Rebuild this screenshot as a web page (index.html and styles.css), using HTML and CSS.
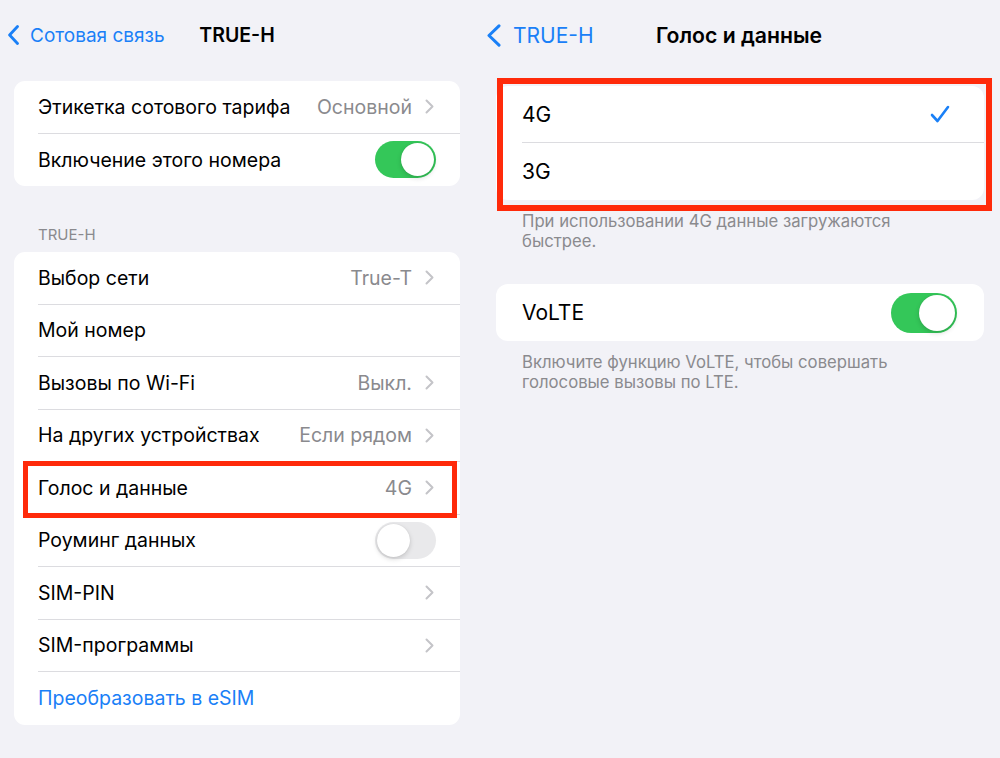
FILE: index.html
```html
<!DOCTYPE html>
<html lang="ru">
<head>
<meta charset="utf-8">
<title>Настройки</title>
<link rel="stylesheet" href="styles.css">
</head>
<body>
<div class="screen">
  <section class="panel panel-left">
    <header class="nav">
      <a class="back">
        <svg class="back-icon" width="11" height="20" viewBox="0 0 11 20"><path d="M9.5 1.5 L1.6 10 L9.5 18.5" fill="none" stroke="currentColor" stroke-width="2.8" stroke-linecap="round" stroke-linejoin="round"/></svg>
        <span>Сотовая связь</span>
      </a>
      <h1 class="title">TRUE-H</h1>
      <span></span>
    </header>

    <div class="group">
      <div class="row"><div class="row-body"><span class="label">Этикетка сотового тарифа</span><span class="detail">Основной</span><svg class="chev" width="9" height="15" viewBox="0 0 9 15"><path d="M1.5 1.5 L7.5 7.5 L1.5 13.5" fill="none" stroke="currentColor" stroke-width="2" stroke-linecap="round" stroke-linejoin="round"/></svg></div></div>
      <div class="row"><div class="row-body"><span class="label">Включение этого номера</span><span class="switch on"></span></div></div>
    </div>

    <div class="section-header">TRUE-H</div>

    <div class="group">
      <div class="row"><div class="row-body"><span class="label">Выбор сети</span><span class="detail">True-T</span><svg class="chev" width="9" height="15" viewBox="0 0 9 15"><path d="M1.5 1.5 L7.5 7.5 L1.5 13.5" fill="none" stroke="currentColor" stroke-width="2" stroke-linecap="round" stroke-linejoin="round"/></svg></div></div>
      <div class="row"><div class="row-body"><span class="label">Мой номер</span></div></div>
      <div class="row"><div class="row-body"><span class="label">Вызовы по Wi-Fi</span><span class="detail">Выкл.</span><svg class="chev" width="9" height="15" viewBox="0 0 9 15"><path d="M1.5 1.5 L7.5 7.5 L1.5 13.5" fill="none" stroke="currentColor" stroke-width="2" stroke-linecap="round" stroke-linejoin="round"/></svg></div></div>
      <div class="row"><div class="row-body"><span class="label">На других устройствах</span><span class="detail">Если рядом</span><svg class="chev" width="9" height="15" viewBox="0 0 9 15"><path d="M1.5 1.5 L7.5 7.5 L1.5 13.5" fill="none" stroke="currentColor" stroke-width="2" stroke-linecap="round" stroke-linejoin="round"/></svg></div></div>
      <div class="row marked"><div class="row-body"><span class="label">Голос и данные</span><span class="detail">4G</span><svg class="chev" width="9" height="15" viewBox="0 0 9 15"><path d="M1.5 1.5 L7.5 7.5 L1.5 13.5" fill="none" stroke="currentColor" stroke-width="2" stroke-linecap="round" stroke-linejoin="round"/></svg></div></div>
      <div class="row"><div class="row-body"><span class="label">Роуминг данных</span><span class="switch"></span></div></div>
      <div class="row"><div class="row-body"><span class="label">SIM-PIN</span><svg class="chev" width="9" height="15" viewBox="0 0 9 15"><path d="M1.5 1.5 L7.5 7.5 L1.5 13.5" fill="none" stroke="currentColor" stroke-width="2" stroke-linecap="round" stroke-linejoin="round"/></svg></div></div>
      <div class="row"><div class="row-body"><span class="label">SIM-программы</span><svg class="chev" width="9" height="15" viewBox="0 0 9 15"><path d="M1.5 1.5 L7.5 7.5 L1.5 13.5" fill="none" stroke="currentColor" stroke-width="2" stroke-linecap="round" stroke-linejoin="round"/></svg></div></div>
      <div class="row"><div class="row-body"><span class="label link">Преобразовать в eSIM</span></div></div>
    </div>
  </section>

  <section class="panel panel-right">
    <header class="nav">
      <a class="back">
        <svg class="back-icon" width="14" height="23" viewBox="0 0 14 23"><path d="M12 1.8 L2 11.5 L12 21.2" fill="none" stroke="currentColor" stroke-width="3" stroke-linecap="round" stroke-linejoin="round"/></svg>
        <span>TRUE-H</span>
      </a>
      <h1 class="title">Голос и данные</h1>
      <span></span>
    </header>

    <div class="group marked">
      <div class="row"><div class="row-body"><span class="label">4G</span><svg class="check" width="20" height="18" viewBox="0 0 20 18"><path d="M2 10 L7.5 16 L18 2" fill="none" stroke="currentColor" stroke-width="2.6" stroke-linecap="round" stroke-linejoin="round"/></svg></div></div>
      <div class="row"><div class="row-body"><span class="label">3G</span></div></div>
    </div>
    <p class="footer">При использовании 4G данные загружаются быстрее.</p>

    <div class="group group-volte">
      <div class="row"><div class="row-body"><span class="label">VoLTE</span><span class="switch on"></span></div></div>
    </div>
    <p class="footer">Включите функцию VoLTE, чтобы совершать голосовые вызовы по LTE.</p>
  </section>
</div>
</body>
</html>
```

FILE: styles.css
```css
html, body {
  margin: 0;
  padding: 0;
}

body {
  background: #f2f2f7;
  font-family: Inter, "Noto Sans", "Liberation Sans", sans-serif;
  color: #000;
  -webkit-font-smoothing: antialiased;
}

.screen {
  display: flex;
  width: 1000px;
  height: 758px;
  overflow: hidden;
}

.panel {
  box-sizing: border-box;
}

.panel-left {
  width: 474px;
}

.panel-right {
  flex: 1;
}

/* Navigation bar */
.nav {
  height: 70px;
  display: grid;
  grid-template-columns: 1fr auto 1fr;
  align-items: center;
  box-sizing: border-box;
}

.panel-left .nav {
  padding: 0 8px;
}

.panel-right .nav {
  padding: 0 9px 0 13px;
}

.back {
  display: flex;
  align-items: center;
  gap: 12px;
  color: #1a80f7;
  white-space: nowrap;
}

.panel-left .back {
  font-size: 19px;
  gap: 11px;
}

.panel-right .back {
  font-size: 21px;
}

.back-icon {
  display: block;
  flex: none;
}

.title {
  margin: 0;
  font-weight: 600;
  white-space: nowrap;
}

.panel-left .title {
  font-size: 19.5px;
}

.panel-right .title {
  font-size: 21.2px;
}

/* Grouped list */
.group {
  background: #fff;
  border-radius: 11px;
  position: relative;
}

.panel-left .group {
  margin: 11px 14px 0;
}

.panel-right .group {
  margin: 16px 16px 0 22px;
  border-radius: 12px;
}

.row {
  position: relative;
  box-sizing: border-box;
}

.panel-left .row {
  height: 52.5px;
  padding-left: 24px;
  font-size: 19.5px;
}

.panel-right .row {
  height: 57px;
  padding-left: 26px;
  font-size: 21px;
}

.row-body {
  height: 100%;
  display: flex;
  align-items: center;
  border-bottom: 1px solid #dcdce0;
  box-sizing: border-box;
}

.panel-left .row-body {
  padding-right: 24px;
}

.panel-right .row-body {
  padding-right: 27px;
}

.row:last-child .row-body {
  border-bottom: none;
}

.label {
  flex: 1;
  white-space: nowrap;
}

.label.link {
  color: #1a80f7;
}

.detail {
  color: #8a8a8e;
  margin-right: 13px;
  white-space: nowrap;
}

.chev {
  display: block;
  color: #c4c4c8;
  margin-right: 2px;
  flex: none;
}

.check {
  display: block;
  color: #1a80f7;
  margin-right: 7px;
}

/* Switch */
.switch {
  position: relative;
  flex: none;
  width: 61px;
  height: 37px;
  border-radius: 19px;
  background: #e9e9eb;
}

.switch::after {
  content: "";
  position: absolute;
  top: 2px;
  left: 2px;
  width: 33px;
  height: 33px;
  border-radius: 50%;
  background: #fff;
  box-shadow: 0 2px 5px rgba(0, 0, 0, 0.16), 0 0 1px rgba(0, 0, 0, 0.12);
}

.switch.on {
  background: #34c759;
}

.switch.on::after {
  left: auto;
  right: 2px;
}

.panel-right .switch {
  width: 66px;
  height: 40px;
  border-radius: 20px;
}

.panel-right .switch::after {
  width: 36px;
  height: 36px;
}

/* Section header */
.section-header {
  margin: 40px 14px 8px;
  padding-left: 24px;
  font-size: 15px;
  line-height: 18px;
  color: #8a8a8e;
}

.section-header + .group {
  margin-top: 0;
}

/* Footer */
.footer {
  margin: 11px 16px 0 22px;
  padding: 0 40px 0 26px;
  font-size: 16.7px;
  line-height: 20px;
  color: #8a8a8e;
}

.panel-right .group-volte {
  margin-top: 33px;
}

/* Red annotation frames */
.row.marked::after {
  content: "";
  position: absolute;
  left: 9px;
  right: 3px;
  top: -1px;
  bottom: -3px;
  border: 5px solid #ff2a0a;
  pointer-events: none;
}

.group.marked::after {
  content: "";
  position: absolute;
  left: 1px;
  right: -8px;
  top: -8px;
  bottom: -11px;
  border: 6px solid #ff2a0a;
  pointer-events: none;
}
```
